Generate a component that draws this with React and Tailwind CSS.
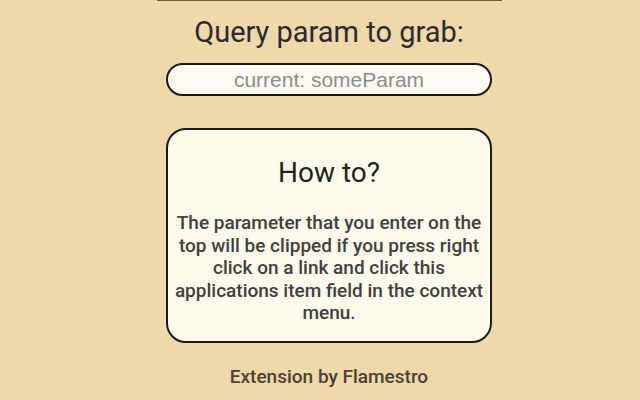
export default function App() {
  return (
    <div className="w-[640px] h-[400px] bg-[#efd8aa] flex justify-center pl-[18px] overflow-hidden" style={{ fontFamily: "Roboto, 'Liberation Sans', sans-serif" }}>
      <div className="w-[345px] flex flex-col items-center border-t border-[#6b5a3a]">
        <div className="mt-[13px] text-[29px] leading-[36px] text-[#2b2b2b]">Query param to grab:</div>
        <div className="mt-[13px] w-[326px] h-[33px] rounded-full border-2 border-[#1a1a1a] bg-[#fffaf2] flex items-center justify-center">
          <span className="text-[21px] leading-none text-[#8c8c8c]" style={{ fontFamily: "'Liberation Sans', Arial, sans-serif" }}>current: someParam</span>
        </div>
        <div className="mt-[32px] w-[326px] h-[215px] rounded-[20px] border-2 border-[#1a1a1a] bg-[#fffbec] flex flex-col items-center px-[5px]">
          <div className="mt-[26px] text-[28px] leading-[34px] text-[#222]">How to?</div>
          <p className="mt-[22px] text-[19px] font-medium leading-[22.5px] text-[#404040] text-center">
            The parameter that you enter on the top will be clipped if you press right click on a link and click this applications item field in the context menu.
          </p>
        </div>
        <div className="mt-[20px] text-[19px] font-medium text-[#4a4232]">Extension by Flamestro</div>
      </div>
    </div>
  );
}
